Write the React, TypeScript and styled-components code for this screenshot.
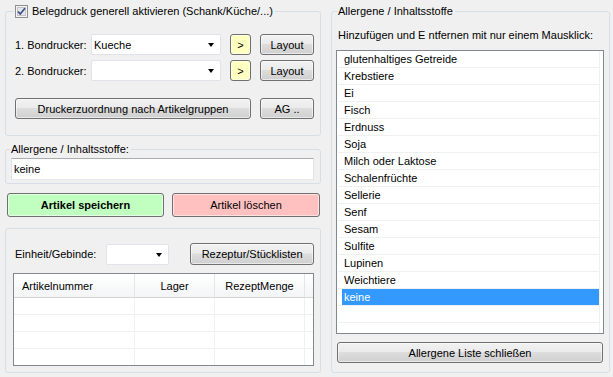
import React from 'react'
import styled, { createGlobalStyle } from 'styled-components'

const GlobalStyle = createGlobalStyle`
  html, body {
    margin: 0;
    padding: 0;
    background: #f0f0f0;
  }
  body {
    font-family: "Liberation Sans", Arial, sans-serif;
    font-size: 11px;
    color: #000;
  }
`

const Page = styled.div`
  width: 613px;
  height: 377px;
  box-sizing: border-box;
  padding: 5px 0 0 5px;
  display: grid;
  grid-template-columns: 316px 279px;
  column-gap: 10px;
  align-items: start;
`

const Column = styled.div`
  display: flex;
  flex-direction: column;
`

// WinForms style group box
const Group = styled.fieldset<{ $h: number; $mt?: number }>`
  margin: ${(p) => p.$mt || 0}px 0 0 0;
  padding: 0;
  min-width: 0;
  box-sizing: border-box;
  height: ${(p) => p.$h}px;
  border: 1px solid #d5dfe5;
  border-radius: 3px;
`

const Legend = styled.legend<{ $ml: number }>`
  margin-left: ${(p) => p.$ml}px;
  padding: 0 2px 0 1px;
  height: 13px;
  line-height: 13px;
  display: flex;
  align-items: center;
  gap: 4px;
  white-space: nowrap;
`

const Inner = styled.div<{ $pad: string }>`
  padding: ${(p) => p.$pad};
  display: flex;
  flex-direction: column;
`

const PrinterGrid = styled.div`
  display: grid;
  grid-template-columns: 67px 130px 21px 54px;
  grid-auto-rows: 21px;
  column-gap: 9px;
  row-gap: 5px;
  align-items: center;
`

const Label = styled.span`
  white-space: nowrap;
`

const Combo = styled.div<{ $w?: number; $ml?: number }>`
  position: relative;
  box-sizing: border-box;
  height: 21px;
  width: ${(p) => (p.$w ? `${p.$w}px` : 'auto')};
  margin-left: ${(p) => p.$ml || 0}px;
  background: #fff;
  border: 1px solid #e2e3ea;
  border-radius: 2px;
  display: flex;
  align-items: center;
  padding-left: 2px;
  &::after {
    content: '';
    position: absolute;
    right: 6px;
    top: 8px;
    border-left: 3.5px solid transparent;
    border-right: 3.5px solid transparent;
    border-top: 4px solid #000;
  }
`

const Button = styled.div<{ $w?: number; $h?: number; $ml?: number; $bg?: string; $bold?: boolean }>`
  box-sizing: border-box;
  width: ${(p) => (p.$w ? `${p.$w}px` : 'auto')};
  height: ${(p) => p.$h || 21}px;
  margin-left: ${(p) => p.$ml || 0}px;
  border: 1px solid #707070;
  border-radius: 3px;
  background: ${(p) => p.$bg || 'linear-gradient(#f2f2f2 0%, #ebebeb 45%, #dddddd 50%, #cfcfcf 100%)'};
  box-shadow: inset 0 0 0 1px rgba(255, 255, 255, 0.55);
  display: flex;
  align-items: center;
  justify-content: center;
  white-space: nowrap;
  font-weight: ${(p) => (p.$bold ? 'bold' : 'normal')};
  color: #000;
`

const ButtonRow = styled.div<{ $mt: number; $gap: number; $pl?: number }>`
  display: flex;
  gap: ${(p) => p.$gap}px;
  margin-top: ${(p) => p.$mt}px;
  padding-left: ${(p) => p.$pl || 0}px;
`

const TextBox = styled.div`
  box-sizing: border-box;
  height: 22px;
  background: #fff;
  border: 1px solid #e2e3ea;
  border-top-color: #abadb3;
  border-bottom-color: #e3e9ef;
  display: flex;
  align-items: center;
  padding-left: 2px;
`

const UnitRow = styled.div`
  display: flex;
  align-items: center;
  padding-left: 2px;
  height: 22px;
`

const Table = styled.div`
  margin-top: 8px;
  box-sizing: border-box;
  width: 301px;
  height: 93px;
  border: 1px solid #828790;
  background: #fff;
  overflow: hidden;
`

const TableRow = styled.div<{ $head?: boolean }>`
  display: grid;
  grid-template-columns: 121px 80px 90px 1fr;
  height: ${(p) => (p.$head ? 24 : 17)}px;
  background: ${(p) => (p.$head ? 'linear-gradient(#ffffff, #f4f5f7)' : '#fff')};
  border-bottom: 1px solid ${(p) => (p.$head ? '#d5d5d5' : '#f0f0f0')};
  box-sizing: border-box;
`

const Cell = styled.div<{ $align?: string; $head?: boolean }>`
  display: flex;
  align-items: center;
  justify-content: ${(p) => p.$align || 'flex-start'};
  padding-left: ${(p) => (p.$align ? 0 : 8)}px;
  border-right: 1px solid ${(p) => (p.$head ? '#e5e5e5' : '#f0f0f0')};
  white-space: nowrap;
`

const Hint = styled.div`
  margin-top: 11px;
  padding-left: 6px;
  height: 13px;
  line-height: 13px;
`

const ListBox = styled.div`
  margin: 8px 0 0 4px;
  box-sizing: border-box;
  width: 268px;
  height: 284px;
  border: 1px solid #828790;
  background: #fff;
  overflow: hidden;
`

const ListColumn = styled.div`
  width: 262px;
  height: 100%;
  border-right: 1px solid #f0f0f0;
`

const ListItem = styled.div`
  height: 17px;
  box-sizing: border-box;
  margin-left: 1px;
  border-bottom: 1px solid #f0f0f0;
  display: flex;
  align-items: stretch;
`

const ItemLabel = styled.span<{ $sel?: boolean }>`
  flex: 1;
  margin-left: 4px;
  padding-left: 2px;
  display: flex;
  align-items: center;
  background: ${(p) => (p.$sel ? '#3399ff' : 'transparent')};
  color: ${(p) => (p.$sel ? '#fff' : '#000')};
`

const CheckBox = () => (
  <svg width="13" height="13" viewBox="0 0 13 13">
    <rect x="0.5" y="0.5" width="12" height="12" fill="#f4f4f4" stroke="#8e8f8f" />
    <rect x="2.5" y="2.5" width="8" height="8" fill="#e4e6ea" stroke="#c2c4c8" />
    <path d="M3 6.5 L5.2 9 L10 3.2" fill="none" stroke="#3c4e86" strokeWidth="1.7" />
  </svg>
)

const allergens = [
  'glutenhaltiges Getreide',
  'Krebstiere',
  'Ei',
  'Fisch',
  'Erdnuss',
  'Soja',
  'Milch oder Laktose',
  'Schalenfrüchte',
  'Sellerie',
  'Senf',
  'Sesam',
  'Sulfite',
  'Lupinen',
  'Weichtiere',
  'keine',
]

export default function App() {
  return (
    <>
      <GlobalStyle />
      <Page>
        <Column>
          <Group $h={131}>
            <Legend $ml={8}>
              <CheckBox />
              Belegdruck generell aktivieren (Schank/Küche/...)
            </Legend>
            <Inner $pad="16px 5px 0 9px">
              <PrinterGrid>
                <Label>1. Bondrucker:</Label>
                <Combo>Kueche</Combo>
                <Button $bg="#ffffc0">&gt;</Button>
                <Button>Layout</Button>
                <Label>2. Bondrucker:</Label>
                <Combo />
                <Button $bg="#ffffc0">&gt;</Button>
                <Button>Layout</Button>
              </PrinterGrid>
              <ButtonRow $mt={17} $gap={9}>
                <Button $w={236}>Druckerzuordnung nach Artikelgruppen</Button>
                <Button $w={54}>AG ..</Button>
              </ButtonRow>
            </Inner>
          </Group>

          <Group $h={41} $mt={7}>
            <Legend $ml={4}>Allergene / Inhaltsstoffe:</Legend>
            <Inner $pad="2px 6px 0 5px">
              <TextBox>keine</TextBox>
            </Inner>
          </Group>

          <ButtonRow $mt={9} $gap={8} $pl={2}>
            <Button $w={157} $h={24} $bg="#c0ffc0" $bold>
              Artikel speichern
            </Button>
            <Button $w={148} $h={24} $bg="#ffc0c0">
              Artikel löschen
            </Button>
          </ButtonRow>

          <Group $h={145} $mt={11}>
            <Inner $pad="14px 6px 0 7px">
              <UnitRow>
                <Label>Einheit/Gebinde:</Label>
                <Combo $w={63} $ml={10} />
                <Button $w={124} $h={22} $ml={21}>
                  Rezeptur/Stücklisten
                </Button>
              </UnitRow>
              <Table>
                <TableRow $head>
                  <Cell $head>Artikelnummer</Cell>
                  <Cell $head $align="center">Lager</Cell>
                  <Cell $head $align="center">RezeptMenge</Cell>
                  <Cell $head />
                </TableRow>
                {[0, 1, 2, 3].map((i) => (
                  <TableRow key={i}>
                    <Cell />
                    <Cell />
                    <Cell />
                    <Cell />
                  </TableRow>
                ))}
              </Table>
            </Inner>
          </Group>
        </Column>

        <Group $h={368}>
          <Legend $ml={5}>Allergene / Inhaltsstoffe</Legend>
          <Inner $pad="0">
            <Hint>Hinzufügen und E ntfernen mit nur einem Mausklick:</Hint>
            <ListBox>
              <ListColumn>
                {allergens.map((a) => (
                  <ListItem key={a}>
                    <ItemLabel $sel={a === 'keine'}>{a}</ItemLabel>
                  </ListItem>
                ))}
                <ListItem>
                  <ItemLabel />
                </ListItem>
                <ListItem>
                  <ItemLabel />
                </ListItem>
              </ListColumn>
            </ListBox>
            <ButtonRow $mt={8} $gap={0} $pl={5}>
              <Button $w={266}>Allergene Liste schließen</Button>
            </ButtonRow>
          </Inner>
        </Group>
      </Page>
    </>
  )
}
